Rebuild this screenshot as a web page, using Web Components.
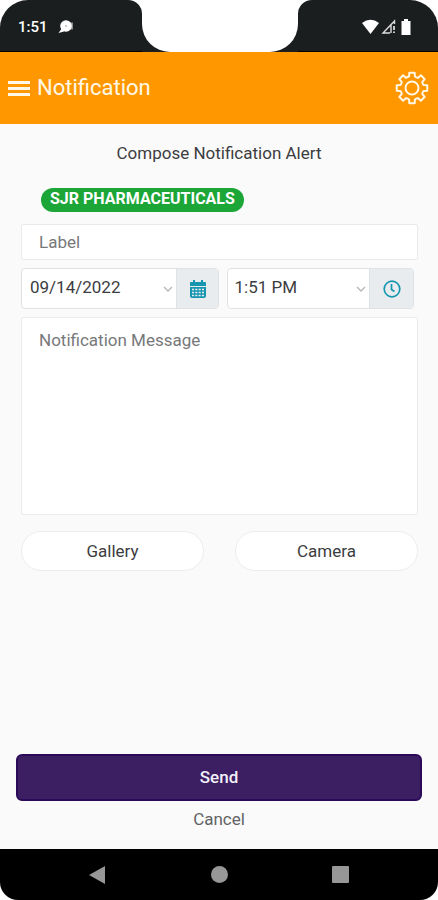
<!DOCTYPE html>
<html lang="en">
<head>
<meta charset="utf-8">
<meta name="viewport" content="width=device-width, initial-scale=1">
<title>Notification</title>
<style>
  html { height: 100%; }
  body { margin: 0; min-height: 100%; display: flex; background: #fff; font-family: Roboto, "Liberation Sans", sans-serif; font-size: 17px; line-height: 20px; color: #3c3d3f; }
</style>
</head>
<body>
<notification-screen></notification-screen>
<script>
const define = (name, html, setup) => customElements.define(name, class extends HTMLElement {
  constructor() {
    super();
    this.attachShadow({ mode: 'open', delegatesFocus: true }).innerHTML =
      '<style>*{box-sizing:border-box}button,input,select,textarea{font:inherit;color:inherit;margin:0}svg{display:block}</style>' + html;
  }
  connectedCallback() { if (setup) setup(this, this.shadowRoot); }
});

define('status-bar', `
<style>
  :host { display: grid; grid-template-columns: 142fr 156px 140fr; height: 52px; color: #fff; }
  .side { background: #1b1e1f; border-bottom: 1px solid #000; display: flex; align-items: center; padding: 2px 18px 0; }
  .left { border-radius: 28px 14px 0 0; gap: 10px; font-size: 15px; font-weight: 500; }
  .right { border-radius: 14px 28px 0 0; justify-content: flex-end; gap: 2px; padding-right: 26px; }
  .cutout { background: linear-gradient(transparent 20px, #1b1e1f 20px); }
  .cutout div { height: 52px; background: #fff; border-radius: 0 0 28px 28px; }
</style>
<div class="side left"><span>1:51</span>
  <svg width="17" height="14" viewBox="0 0 17 14"><path d="M9 2.500h6v7H9z" fill="#8c8e8f"/><circle cx="8" cy="6" r="5.800" fill="#fff"/><path d="M4 8L.5 13l5.500-1.500z" fill="#fff"/><circle cx="8" cy="6" r="1.200" fill="#ccc"/></svg>
</div>
<div class="cutout"><div></div></div>
<div class="side right">
  <svg width="17" height="15" viewBox="0 0 17 15"><path d="M0 4Q8.500-2.500 17 4L8.500 15z" fill="#fff"/></svg>
  <svg width="15" height="15" viewBox="0 0 15 15"><path d="M9 14H2L13.500 2v3M10 5v9" fill="none" stroke="#ddd" stroke-width="1.400"/><path d="M13 7v4M13 12.500v1.500" stroke="#fff" stroke-width="1.500"/></svg>
  <svg width="14" height="16" viewBox="0 0 14 16"><path d="M6 0h4v2h2.500v14h-9V2H6z" fill="#fff"/></svg>
</div>`);

define('app-bar', `
<style>
  :host { display: flex; align-items: center; height: 72px; padding: 0 9px 0 8px; background: #ff9800; color: #fff8e8; }
  button { border: 0; padding: 0; background: none; }
  h1 { flex: 1; margin: 0 0 0 7px; font-size: 22px; line-height: 28px; font-weight: 400; }
</style>
<button type="button" aria-label="Menu"><svg width="22" height="15" viewBox="0 0 22 15"><path d="M0 1.500h22M0 7.500h22M0 13.500h22" stroke="currentColor" stroke-width="3"/></svg></button>
<h1><slot></slot></h1>
<button type="button" aria-label="Settings"><svg width="34" height="34" viewBox="-17 -17 34 34" fill="none" stroke="currentColor" stroke-width="2" stroke-linejoin="round"><path class="gear"/><circle r="6.500"/></svg></button>`,
(host, root) => {
  const steps = [[-14, 12], [-10, 15.5], [10, 15.5], [14, 12]];
  let d = '';
  for (let i = 0; i < 8; i++) steps.forEach(([a, r], k) => {
    const t = (i * 45 + a) * Math.PI / 180;
    const p = (r * Math.sin(t)).toFixed(2) + ' ' + (-r * Math.cos(t)).toFixed(2);
    d += !d ? 'M' + p : k === 0 ? 'A4 4 0 0 0 ' + p : 'L' + p;
  });
  root.querySelector('.gear').setAttribute('d', d + 'Z');
});

define('tag-pill', `
<style>
  :host { display: block; align-self: flex-start; padding: 1px 9px 3px; border-radius: 12px; background: #1ba637; color: #fff; font-size: 16px; font-weight: 700; }
</style><slot></slot>`);

define('text-field', `
<style>
  :host { display: block; }
  input, textarea { display: block; width: 100%; padding: 0 17px; border: 1px solid #e8eaeb; border-radius: 2px; background: #fff; outline-color: #1796b0; resize: none; }
  input { height: 36px; }
  textarea { height: 198px; padding-top: 12px; }
  ::placeholder { color: #77787a; opacity: 1; }
</style>`, (host, root) => {
  const el = document.createElement(host.hasAttribute('multiline') ? 'textarea' : 'input');
  el.placeholder = host.getAttribute('label');
  el.setAttribute('aria-label', el.placeholder);
  root.append(el);
});

define('picker-field', `
<style>
  :host { display: flex; height: 41px; border: 1px solid #dee2e4; border-radius: 4px; background: #fff; overflow: hidden; }
  .value { flex: 1; min-width: 0; display: grid; align-items: center; }
  select { grid-area: 1 / 1; width: 100%; height: 39px; padding: 0 24px 3px var(--inset, 8px); border: 0; background: none; appearance: none; }
  .chevron { grid-area: 1 / 1; justify-self: end; margin-right: 3px; pointer-events: none; }
  button { width: var(--addon, 42px); padding: 0; border: 0; border-left: 1px solid #dee2e4; background: #e9ecef; color: #1796b0; display: grid; place-items: center; }
</style>
<div class="value"><select><option></option></select>
<svg class="chevron" width="10" height="6" viewBox="0 0 10 6"><path d="M1 1l4 4 4-4" fill="none" stroke="#b4b6b8" stroke-width="1.300"/></svg></div>
<button type="button"><slot></slot></button>`, (host, root) => {
  root.querySelector('option').textContent = host.getAttribute('value');
  root.querySelector('select').setAttribute('aria-label', host.getAttribute('label'));
  root.querySelector('button').setAttribute('aria-label', 'Choose ' + host.getAttribute('label'));
});

define('action-button', `
<style>
  :host { display: block; }
  button { display: block; width: 100%; height: 40px; padding: 0; border: 1px solid #ebedee; border-radius: 20px; background: #fff; }
  :host([kind=primary]) button { height: 47px; padding-bottom: 1px; border: 2px solid #2a0a58; border-radius: 6px; background: #3b1f62; color: #f4f0fa; font-weight: 500; }
  :host([kind=text]) button { height: 36px; border: 0; background: none; color: #626365; }
</style><button type="button"><slot></slot></button>`);

define('system-nav', `
<style>
  :host { display: flex; height: 51px; align-items: center; justify-content: space-between; padding: 0 89px; background: #000; border-radius: 0 0 18px 18px; }
  button { border: 0; padding: 0; background: none; color: #979797; }
</style>
<button type="button" aria-label="Back"><svg width="18" height="20" viewBox="0 0 18 20"><path d="M0 10L16 1v18z" fill="currentColor"/></svg></button>
<button type="button" aria-label="Home"><svg width="17" height="17" viewBox="0 0 17 17"><circle cx="8.500" cy="8.500" r="8.500" fill="currentColor"/></svg></button>
<button type="button" aria-label="Recent apps"><svg width="17" height="17" viewBox="0 0 17 17"><rect width="17" height="17" rx="1" fill="currentColor"/></svg></button>`);

define('notification-screen', `
<style>
  :host { flex: 1; display: flex; flex-direction: column; min-width: 0; }
  main { flex: 1; display: flex; flex-direction: column; padding: 19px 16px 12px; background: #fafafa; }
  h2 { margin: 0 0 25px; font-size: 17px; line-height: 20px; font-weight: 400; text-align: center; }
  form { display: flex; flex-direction: column; gap: 8px; padding: 0 4px 0 5px; }
  tag-pill { margin: 0 0 4px 20px; }
  .when { display: grid; grid-template-columns: 199fr 187fr; gap: 8px; padding-right: 4px; }
  .when picker-field + picker-field { --inset: 6px; --addon: 44px; }
  .sources { display: grid; grid-template-columns: 1fr 1fr; gap: 31px; margin-top: 8px; }
  .end { margin-top: auto; }
</style>
<status-bar></status-bar>
<app-bar>Notification</app-bar>
<main>
  <h2>Compose Notification Alert</h2>
  <form>
    <tag-pill>SJR PHARMACEUTICALS</tag-pill>
    <text-field label="Label"></text-field>
    <div class="when">
      <picker-field label="date" value="09/14/2022"><svg width="18" height="18" viewBox="0 0 18 18"><path d="M1 6V3q0-1 1-1h2V0h2v2h6V0h2v2h2q1 0 1 1v3zM1 7h16v9q0 2-2 2H3q-2 0-2-2z" fill="#1796b0"/><path d="M3 9.500h12M3 12.500h12M3 15.500h12" stroke="#e9ecef" stroke-width="1.600" stroke-dasharray="2.100 1.200"/></svg></picker-field>
      <picker-field label="time" value="1:51 PM"><svg width="18" height="18" viewBox="0 0 18 18" fill="none" stroke="#1796b0" stroke-width="1.700"><circle cx="9" cy="9" r="7.800"/><path d="M8.500 4v5.500l3 2"/></svg></picker-field>
    </div>
    <text-field label="Notification Message" multiline></text-field>
    <div class="sources"><action-button>Gallery</action-button><action-button>Camera</action-button></div>
  </form>
  <div class="end"><action-button kind="primary">Send</action-button><action-button kind="text">Cancel</action-button></div>
</main>
<system-nav></system-nav>`);
</script>
</body>
</html>
